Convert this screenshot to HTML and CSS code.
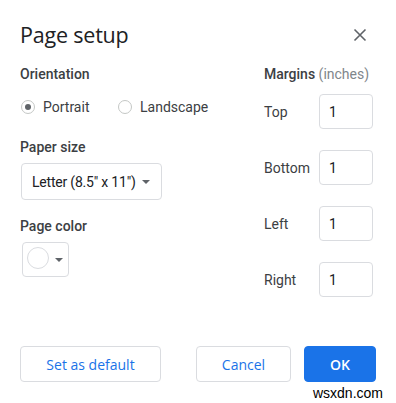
FILE: index.html
```html
<!DOCTYPE html>
<html>
<head>
<meta charset="utf-8">
<link rel="stylesheet" href="styles.css">
</head>
<body>
<div class="dialog">
  <div class="header">
    <div class="title">Page setup</div>
    <div class="close">
      <svg width="14" height="14" viewBox="0 0 14 14"><path d="M1.5 1.5 L12.5 12.5 M12.5 1.5 L1.5 12.5" stroke="#5f6368" stroke-width="1.6" fill="none"/></svg>
    </div>
  </div>
  <div class="body">
    <div class="left">
      <div class="label strong">Orientation</div>
      <div class="radios">
        <div class="radio first"><span class="ring checked"></span><span>Portrait</span></div>
        <div class="radio"><span class="ring"></span><span>Landscape</span></div>
      </div>
      <div class="label strong sec">Paper size</div>
      <div class="select">
        <span class="seltext">Letter (8.5" x 11")</span>
        <span class="caret"></span>
      </div>
      <div class="label strong sec2">Page color</div>
      <div class="color">
        <span class="swatch"></span>
        <span class="caret"></span>
      </div>
    </div>
    <div class="right">
      <div class="label"><span class="strong">Margins</span> <span class="muted">(inches)</span></div>
      <div class="margins">
        <div class="mrow"><span class="mlabel">Top</span><span class="input">1</span></div>
        <div class="mrow"><span class="mlabel">Bottom</span><span class="input">1</span></div>
        <div class="mrow"><span class="mlabel">Left</span><span class="input">1</span></div>
        <div class="mrow"><span class="mlabel">Right</span><span class="input">1</span></div>
      </div>
    </div>
  </div>
  <div class="footer">
    <button class="btn default">Set as default</button>
    <div class="spacer"></div>
    <button class="btn cancel">Cancel</button>
    <button class="btn ok">OK</button>
  </div>
</div>
<div class="watermark">wsxdn.com</div>
</body>
</html>
```
FILE: styles.css
```css
html, body {
  margin: 0;
  padding: 0;
  background: #fff;
}
body {
  font-family: Roboto, "Liberation Sans", sans-serif;
  font-size: 14px;
  color: #3c4043;
  width: 396px;
  height: 403px;
  position: relative;
  overflow: hidden;
}
.dialog {
  padding: 0 20px 0 20px;
}
.header {
  display: flex;
  align-items: center;
  justify-content: space-between;
  height: 36px;
  padding-top: 17px;
}
.title {
  font-family: "Open Sans", Roboto, sans-serif;
  font-size: 21.5px;
  color: #202124;
  line-height: 36px;
  letter-spacing: -0.2px;
}
.close {
  width: 14px;
  height: 14px;
  margin-right: 9px;
  margin-top: -1px;
  display: flex;
}
.body {
  display: flex;
  margin-top: 11px;
}
.left {
  width: 244px;
  display: flex;
  flex-direction: column;
  align-items: flex-start;
}
.right {
  width: 109px;
  display: flex;
  flex-direction: column;
}
.label {
  line-height: 20px;
  height: 20px;
  white-space: nowrap;
}
.strong {
  font-weight: 500;
  color: #3c4043;
}
.muted {
  color: #80868b;
}
.radios {
  display: flex;
  margin-top: 12px;
  height: 22px;
  align-items: center;
}
.radio {
  display: flex;
  align-items: center;
  gap: 8px;
}
.radio.first {
  width: 97px;
}
.ring {
  width: 12px;
  height: 12px;
  border: 1px solid #c4c7c5;
  border-radius: 50%;
  display: flex;
  align-items: center;
  justify-content: center;
  margin-left: 1px;
}
.ring.checked::after {
  content: "";
  width: 6px;
  height: 6px;
  border-radius: 50%;
  background: #5f6368;
}
.sec {
  margin-top: 19px;
}
.select {
  margin-top: 6px;
  box-sizing: border-box;
  width: 141px;
  height: 37px;
  border: 1px solid #dadce0;
  border-radius: 4px;
  display: flex;
  align-items: center;
  justify-content: space-between;
  padding: 0 11px 0 10px;
  color: #202124;
  margin-left: 1px;
  white-space: nowrap;
}
.seltext {
  letter-spacing: -0.2px;
}
.caret {
  width: 0;
  height: 0;
  border-left: 4px solid transparent;
  border-right: 4px solid transparent;
  border-top: 4px solid #5f6368;
}
.sec2 {
  margin-top: 16px;
}
.color {
  margin-top: 6px;
  margin-left: 2px;
  box-sizing: border-box;
  width: 47px;
  height: 35px;
  border: 1px solid #dadce0;
  border-radius: 4px;
  display: flex;
  align-items: center;
  padding-left: 4px;
  gap: 6px;
}
.swatch {
  width: 22px;
  height: 22px;
  border: 1px solid #dadce0;
  border-radius: 50%;
  box-sizing: border-box;
  margin-top: -3px;
}
.margins {
  display: flex;
  flex-direction: column;
  gap: 21px;
  margin-top: 10px;
}
.mrow {
  display: flex;
  align-items: center;
  height: 35px;
}
.mlabel {
  width: 55px;
}
.input {
  box-sizing: border-box;
  width: 54px;
  height: 35px;
  border: 1px solid #dadce0;
  border-radius: 4px;
  display: flex;
  align-items: center;
  padding-left: 9px;
  color: #202124;
}
.footer {
  display: flex;
  margin-top: 49px;
  align-items: center;
}
.spacer {
  flex: 1;
}
.btn {
  font-family: "Open Sans", Roboto, sans-serif;
  font-size: 14px;
  font-weight: 500;
  height: 36px;
  border-radius: 4px;
  box-sizing: border-box;
  padding: 0;
  cursor: pointer;
}
.default {
  width: 141px;
  background: #fff;
  border: 1px solid #dadce0;
  color: #1a73e8;
}
.cancel {
  width: 95px;
  background: #fff;
  border: 1px solid #dadce0;
  color: #1a73e8;
  margin-right: 13px;
}
.ok {
  width: 72px;
  background: #1a73e8;
  border: 1px solid #1a73e8;
  color: #fff;
  font-weight: 600;
}
.watermark {
  position: absolute;
  right: 13px;
  bottom: 2px;
  font-family: "Liberation Sans", Arial, sans-serif;
  font-size: 14px;
  color: #000;
}
```
